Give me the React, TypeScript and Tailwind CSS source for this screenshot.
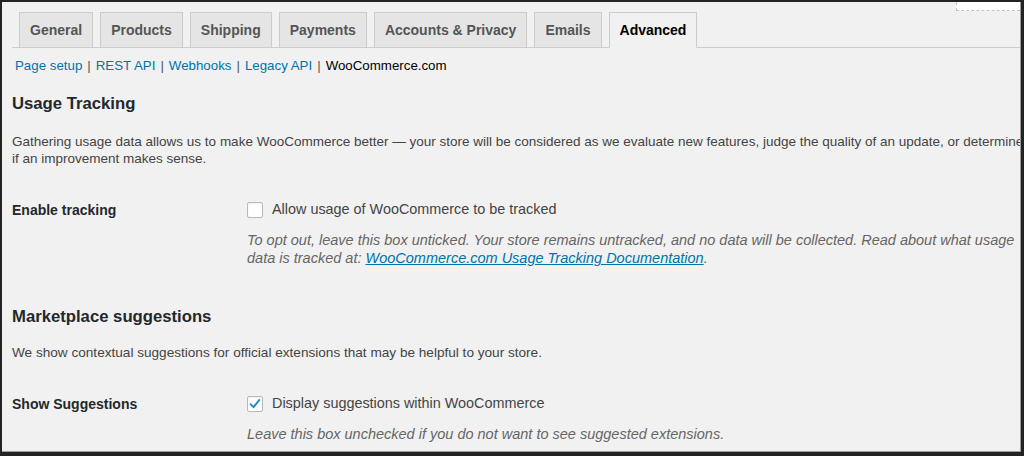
import React from 'react';

const tabs = ['General', 'Products', 'Shipping', 'Payments', 'Accounts & Privacy', 'Emails', 'Advanced'];
const subLinks = ['Page setup', 'REST API', 'Webhooks', 'Legacy API'];

const Checkbox: React.FC<{ checked?: boolean }> = ({ checked }) => (
  <span className="flex h-[16px] w-[16px] shrink-0 items-center justify-center rounded-[2px] border border-[#b4b9be] bg-white shadow-[inset_0_1px_2px_rgba(0,0,0,0.07)]">
    {checked && (
      <svg width="14" height="14" viewBox="0 0 16 16" fill="none">
        <path d="M3.2 8.4 L6.4 11.6 L12.8 3.6" stroke="#1e8cbe" strokeWidth="2.2" strokeLinecap="square" />
      </svg>
    )}
  </span>
);

const App: React.FC = () => {
  return (
    <div className="h-[456px] w-[1024px] bg-[#232323] pb-[4px] pl-[2px] pr-[3px] pt-[2px] font-['Liberation_Sans',Arial,sans-serif]">
      <div className="flex h-full flex-col overflow-hidden border-b border-r border-[#9c9c9c] bg-[#f1f1f1]">
        {/* top strip, cut-off screen options */}
        <div className="flex h-[10px] shrink-0 justify-end">
          <div className="h-[9px] w-[64px] border-b border-l border-dashed border-[#c3c3c3] bg-white" />
        </div>

        {/* tabs */}
        <div className="ml-[10px] flex shrink-0 gap-[7px] border-b border-[#ccc] pl-[7px]">
          {tabs.map((t) => {
            const active = t === 'Advanced';
            return (
              <div
                key={t}
                className={`-mb-px h-[36px] whitespace-nowrap border border-[#ccc] px-[10px] text-[14px] font-bold leading-[34px] ${
                  active ? 'border-b-[#f1f1f1] bg-[#f1f1f1] text-black' : 'bg-[#e5e5e5] text-[#555]'
                }`}
              >
                {t}
              </div>
            );
          })}
        </div>

        <div className="flex flex-col pl-[10px]">
          {/* sub navigation */}
          <div className="ml-[3px] mt-[8px] flex whitespace-nowrap text-[13.3px] leading-[20px]">
            {subLinks.map((l) => (
              <React.Fragment key={l}>
                <span className="text-[#0073aa]">{l}</span>
                <span className="mx-[5px] text-[#555]">|</span>
              </React.Fragment>
            ))}
            <span className="text-black">WooCommerce.com</span>
          </div>

          {/* Usage Tracking */}
          <h2 className="mt-[17px] text-[16.7px] font-bold leading-[22px] text-[#23282d]">Usage Tracking</h2>
          <p className="mt-[18px] whitespace-nowrap text-[13.5px] leading-[17px] text-[#444]">
            Gathering usage data allows us to make WooCommerce better — your store will be considered as we evaluate new
            features, judge the quality of an update, or determine
            <br />
            if an improvement makes sense.
          </p>

          <div className="mt-[33px] grid grid-cols-[235px_1fr]">
            <div className="text-[14px] font-bold leading-[20px] text-[#23282d]">Enable tracking</div>
            <div className="flex flex-col">
              <label className="flex h-[20px] items-center gap-[9px] text-[14.4px] text-[#444]">
                <Checkbox />
                <span className="whitespace-nowrap">Allow usage of WooCommerce to be tracked</span>
              </label>
              <p className="mt-[11px] whitespace-nowrap text-[14.5px] italic leading-[18px] text-[#666]">
                To opt out, leave this box unticked. Your store remains untracked, and no data will be collected. Read about
                what usage
                <br />
                data is tracked at:{' '}
                <span className="text-[#0073aa] underline">WooCommerce.com Usage Tracking Documentation</span>.
              </p>
            </div>
          </div>

          {/* Marketplace suggestions */}
          <h2 className="mt-[39px] text-[16.7px] font-bold leading-[22px] text-[#23282d]">Marketplace suggestions</h2>
          <p className="mt-[16px] whitespace-nowrap text-[13.6px] leading-[17px] text-[#444]">
            We show contextual suggestions for official extensions that may be helpful to your store.
          </p>

          <div className="mt-[33px] grid grid-cols-[235px_1fr]">
            <div className="text-[14px] font-bold leading-[20px] text-[#23282d]">Show Suggestions</div>
            <div className="flex flex-col">
              <label className="flex h-[20px] items-center gap-[9px] text-[14.4px] text-[#444]">
                <Checkbox checked />
                <span className="whitespace-nowrap">Display suggestions within WooCommerce</span>
              </label>
              <p className="mt-[11px] whitespace-nowrap text-[14.5px] italic leading-[18px] text-[#666]">
                Leave this box unchecked if you do not want to see suggested extensions.
              </p>
            </div>
          </div>
        </div>
      </div>
    </div>
  );
};

export default App;
